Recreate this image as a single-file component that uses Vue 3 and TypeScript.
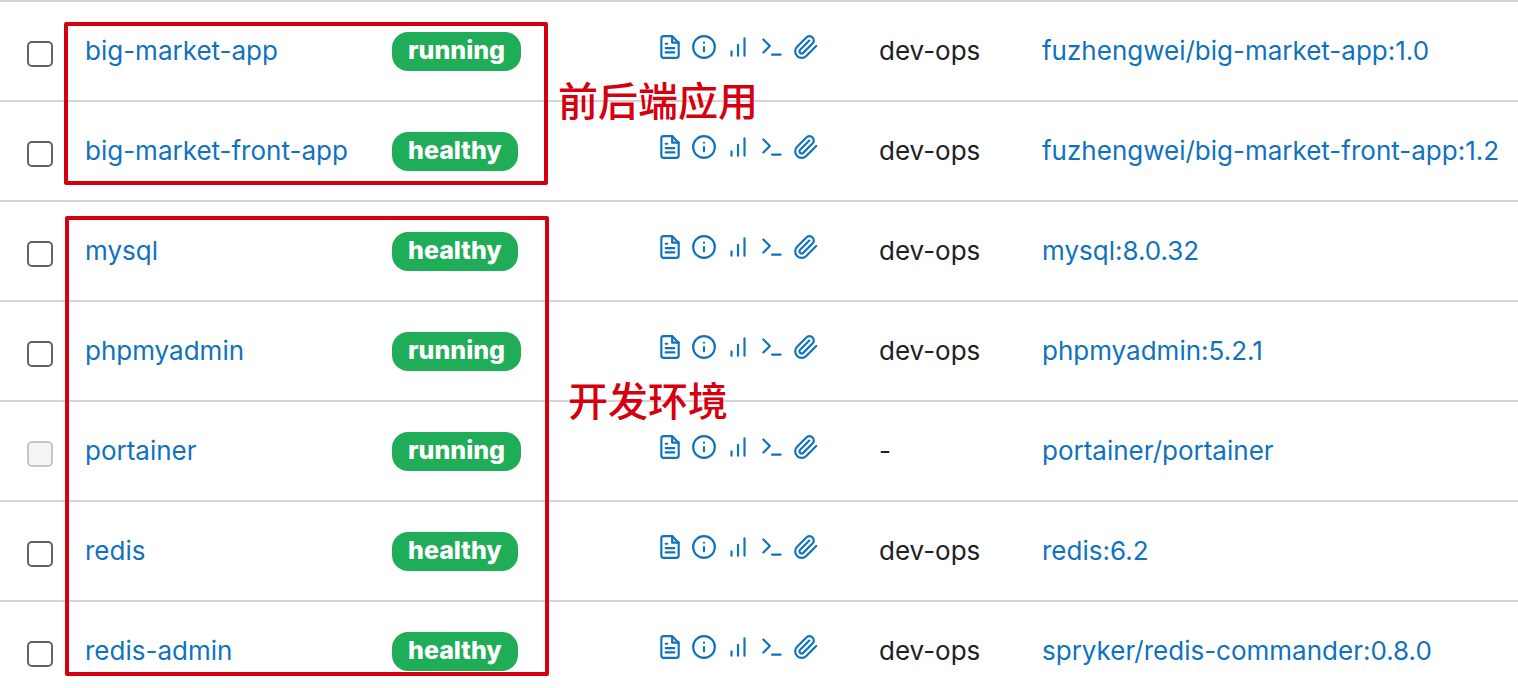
<script setup lang="ts">
interface Container {
  name: string
  status: 'running' | 'healthy'
  stack: string
  image: string
  locked?: boolean
}

const containers: Container[] = [
  { name: 'big-market-app', status: 'running', stack: 'dev-ops', image: 'fuzhengwei/big-market-app:1.0' },
  { name: 'big-market-front-app', status: 'healthy', stack: 'dev-ops', image: 'fuzhengwei/big-market-front-app:1.2' },
  { name: 'mysql', status: 'healthy', stack: 'dev-ops', image: 'mysql:8.0.32' },
  { name: 'phpmyadmin', status: 'running', stack: 'dev-ops', image: 'phpmyadmin:5.2.1' },
  { name: 'portainer', status: 'running', stack: '-', image: 'portainer/portainer', locked: true },
  { name: 'redis', status: 'healthy', stack: 'dev-ops', image: 'redis:6.2' },
  { name: 'redis-admin', status: 'healthy', stack: 'dev-ops', image: 'spryker/redis-commander:0.8.0' },
]

const actions: { label: string; paths: string[] }[] = [
  {
    label: 'Logs',
    paths: [
      'M14 2H6.2C4.8 2 4 2.8 4 4.2v15.6C4 21.2 4.8 22 6.2 22h11.6c1.4 0 2.2-.8 2.2-2.2V8z',
      'M14 2v6h6',
      'M9.5 9H8M16 13H8M16 17H8',
    ],
  },
  { label: 'Inspect', paths: ['M22 12a10 10 0 1 1-20 0 10 10 0 0 1 20 0z', 'M12 16v-4M12 8h.01'] },
  { label: 'Stats', paths: ['M6 20v-4M12 20V10M18 20V4'] },
  { label: 'Console', paths: ['M4 17l6-6-6-6M12 19h8'] },
  {
    label: 'Attach',
    paths: ['M21.44 11.05l-9.19 9.19a6 6 0 0 1-8.49-8.49l8.57-8.57A4 4 0 1 1 18 8.84l-8.59 8.57a2 2 0 0 1-2.83-2.83l8.49-8.48'],
  },
]
</script>

<template>
  <main class="board">
    <table class="containers">
      <colgroup>
        <col class="col-select" />
        <col class="col-name" />
        <col class="col-status" />
        <col class="col-actions" />
        <col class="col-stack" />
        <col />
      </colgroup>
      <tbody>
        <tr v-for="item in containers" :key="item.name">
          <td class="select">
            <input type="checkbox" :aria-label="item.name" :disabled="item.locked" />
          </td>
          <td><a href="#">{{ item.name }}</a></td>
          <td class="status"><span class="badge">{{ item.status }}</span></td>
          <td>
            <div class="actions">
              <button v-for="action in actions" :key="action.label" type="button" :aria-label="action.label">
                <svg viewBox="0 0 24 24" aria-hidden="true">
                  <path v-for="d in action.paths" :key="d" :d="d" />
                </svg>
              </button>
            </div>
          </td>
          <td>{{ item.stack }}</td>
          <td><a href="#">{{ item.image }}</a></td>
        </tr>
      </tbody>
    </table>
    <div class="frame frame-apps"></div>
    <div class="frame frame-env"></div>
    <p class="note note-apps">前后端应用</p>
    <p class="note note-env">开发环境</p>
  </main>
</template>

<style>
body {
  background: #fff;
}
</style>

<style scoped>
.board {
  position: relative;
  font-family: Inter, "Liberation Sans", sans-serif;
  font-size: 26px;
  line-height: 40px;
  color: #212121;
}
.containers {
  width: 100%;
  table-layout: fixed;
  border-collapse: separate;
  border-spacing: 0;
}
.col-select { width: 85px; }
.col-name { width: 307px; }
.col-status { width: 265px; }
.col-actions { width: 222px; }
.col-stack { width: 163px; }
td {
  box-sizing: border-box;
  height: 100px;
  padding: 29px 0 0;
  border-top: 2px solid #d4d4d4;
  vertical-align: top;
  white-space: nowrap;
}
tr:last-child td {
  height: 88px;
}
.select {
  padding: 39px 0 0 27px;
}
.status {
  padding-top: 30px;
}
a {
  color: #1072be;
  text-decoration: none;
}
input {
  appearance: none;
  display: block;
  box-sizing: border-box;
  width: 26px;
  height: 26px;
  margin: 0;
  border: 2px solid #636363;
  border-radius: 5px;
  background: #fff;
}
input:disabled {
  border-color: #c6c6c6;
  background: #f4f4f4;
}
.badge {
  display: block;
  box-sizing: border-box;
  width: fit-content;
  height: 39px;
  padding: 0 16px;
  border-radius: 16px;
  background: #1fad58;
  color: #fff;
  font-size: 25px;
  font-weight: 800;
  line-height: 36px;
}
.actions {
  display: flex;
  gap: 8px;
  padding-top: 3px;
}
button {
  display: block;
  width: 26px;
  height: 26px;
  padding: 0;
  border: 0;
  background: none;
  color: #1072be;
}
svg {
  display: block;
  width: 26px;
  height: 26px;
  fill: none;
  stroke: currentColor;
  stroke-width: 2;
  stroke-linecap: round;
  stroke-linejoin: round;
}
.frame {
  position: absolute;
  box-sizing: border-box;
  border: 4px solid #d5000f;
  border-radius: 2px;
  pointer-events: none;
}
.frame-apps {
  left: 64px;
  top: 22px;
  width: 484px;
  height: 163px;
}
.frame-env {
  left: 65px;
  top: 216px;
  width: 484px;
  height: 460px;
}
.note {
  position: absolute;
  margin: 0;
  color: #d5000f;
  font-family: "Noto Sans CJK SC", sans-serif;
  font-size: 40px;
  font-weight: 500;
  line-height: 60px;
  white-space: nowrap;
}
.note-apps {
  left: 558px;
  top: 69px;
}
.note-env {
  left: 568px;
  top: 369px;
}
</style>
